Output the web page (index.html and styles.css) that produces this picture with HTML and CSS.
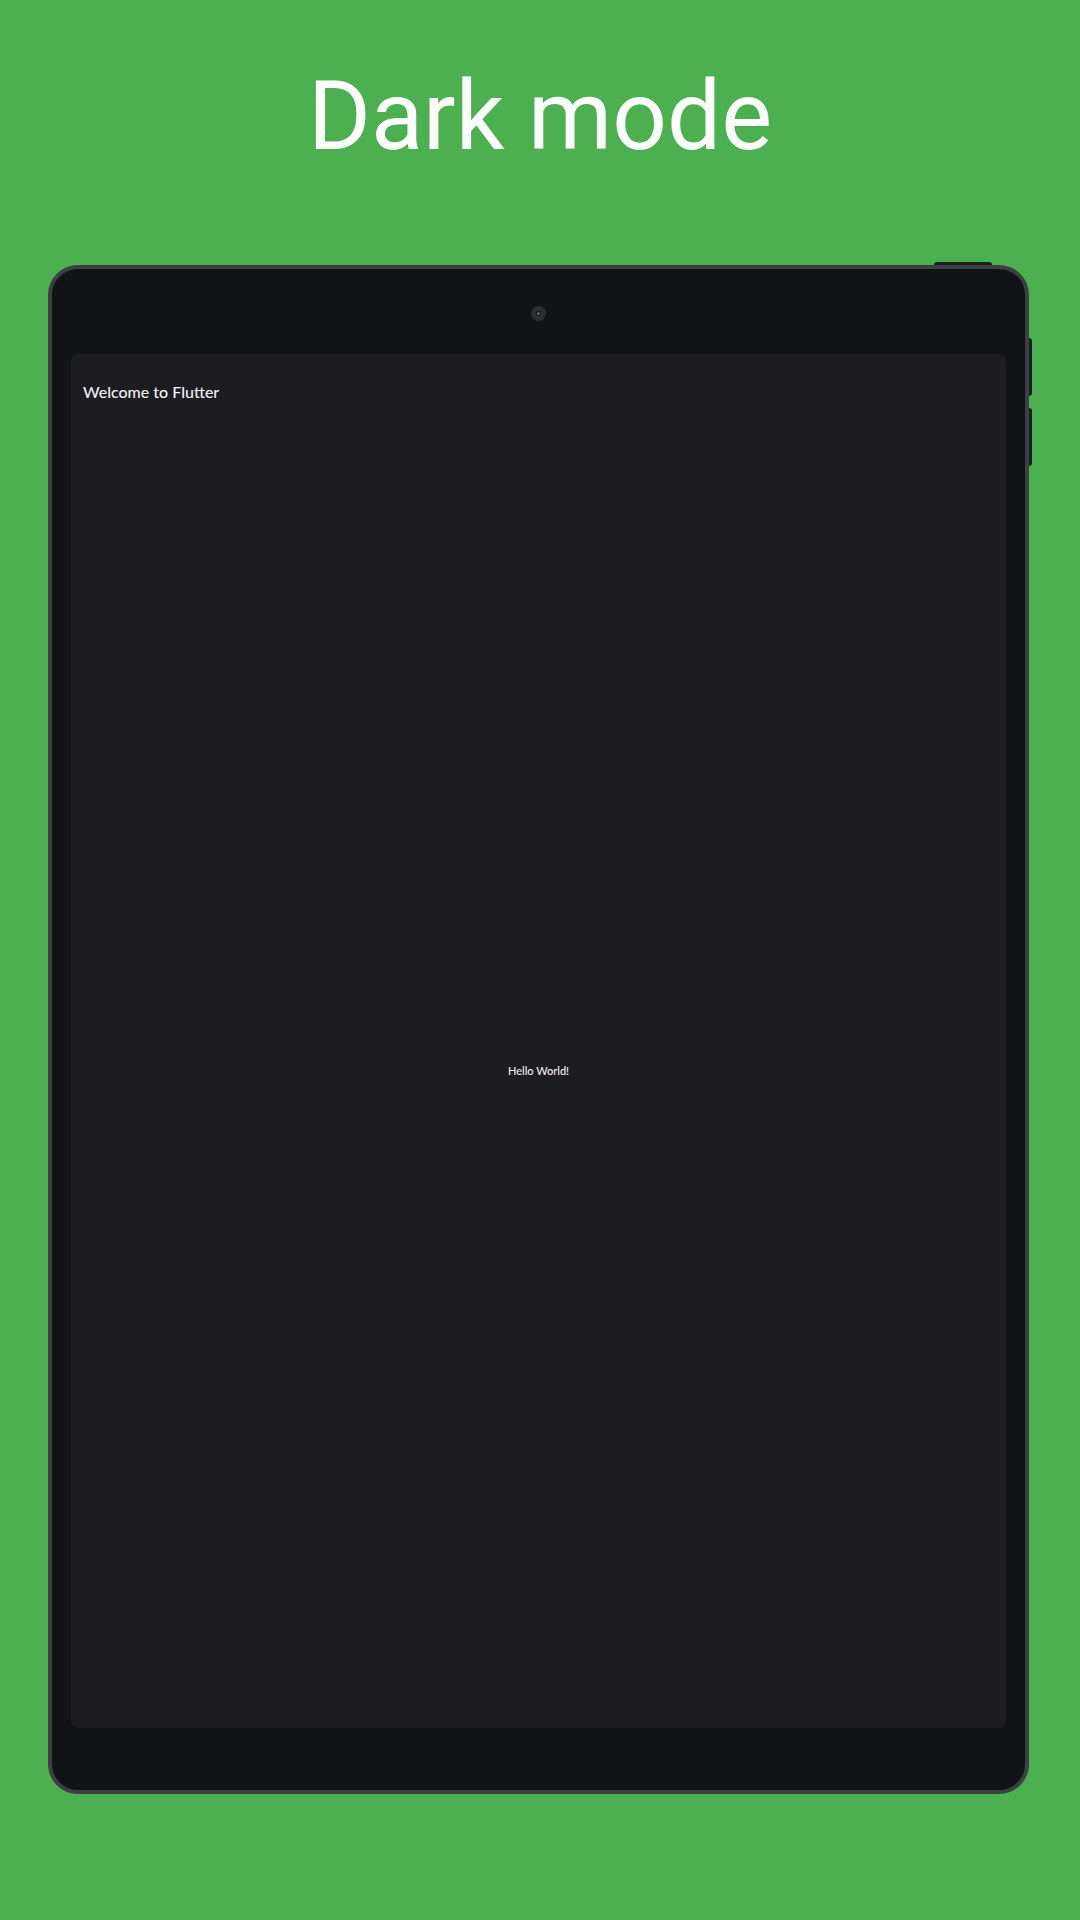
FILE: index.html
```html
<!DOCTYPE html>
<html>
<head>
<meta charset="utf-8">
<link rel="stylesheet" href="styles.css">
</head>
<body>
<div class="page">
  <header class="title">Dark mode</header>
  <div class="tablet">
    <div class="btn-top"></div>
    <div class="btn-side btn-side-1"></div>
    <div class="btn-side btn-side-2"></div>
    <div class="bezel-top"><div class="camera"><div class="lens"></div></div></div>
    <div class="screen">
      <div class="appbar">Welcome to Flutter</div>
      <div class="content"><span class="hello">Hello World!</span></div>
    </div>
  </div>
</div>
</body>
</html>
```
FILE: styles.css
```css
html, body {
  margin: 0;
  padding: 0;
}
body {
  width: 1080px;
  height: 1920px;
  background: #4caf50;
  overflow: hidden;
}
.page {
  display: flex;
  flex-direction: column;
  height: 1920px;
}
.title {
  height: 265px;
  box-sizing: border-box;
  padding-top: 68px;
  text-align: center;
  font-family: Roboto, "Liberation Sans", sans-serif;
  font-size: 96px;
  line-height: 96px;
  color: #ffffff;
}
.tablet {
  position: relative;
  margin-left: 48px;
  width: 981px;
  height: 1529px;
  box-sizing: border-box;
  border: 4px solid #3c4043;
  border-radius: 30px;
  background: #111416;
  padding: 0 19px 62px 19px;
  display: flex;
  flex-direction: column;
}
.btn-top {
  position: absolute;
  top: -7px;
  left: 882px;
  width: 58px;
  height: 10px;
  background: #1d2023;
  border-radius: 3px 3px 0 0;
  z-index: -1;
}
.btn-side {
  position: absolute;
  right: -7px;
  width: 10px;
  height: 58px;
  background: #1d2023;
  border-radius: 0 3px 3px 0;
  z-index: -1;
}
.btn-side-1 { top: 69px; }
.btn-side-2 { top: 139px; }
.bezel-top {
  height: 85px;
  display: flex;
  justify-content: center;
  align-items: center;
  padding-top: 3px;
  box-sizing: border-box;
}
.camera {
  width: 15px;
  height: 15px;
  border-radius: 50%;
  background: #2b2f33;
  display: flex;
  align-items: center;
  justify-content: center;
  margin-right: 1px;
}
.lens {
  width: 5px;
  height: 5px;
  border-radius: 50%;
  background: #111416;
  display: flex;
  align-items: center;
  justify-content: center;
}
.lens::after {
  content: "";
  width: 3px;
  height: 3px;
  border-radius: 50%;
  background: #5d6368;
}
.screen {
  flex: 1;
  background: #1d1c21;
  border-radius: 7px;
  display: flex;
  flex-direction: column;
}
.appbar {
  height: 59px;
  box-sizing: border-box;
  padding: 28px 0 0 12px;
  font-family: Lato, "Open Sans", sans-serif;
  font-size: 16px;
  font-weight: 500;
  line-height: 19px;
  color: #f2eff4;
}
.content {
  flex: 1;
  display: flex;
  align-items: center;
  justify-content: center;
}
.hello {
  font-family: Lato, "Open Sans", sans-serif;
  font-size: 11px;
  font-weight: 500;
  line-height: 14px;
  color: #f2eff4;
}
```
